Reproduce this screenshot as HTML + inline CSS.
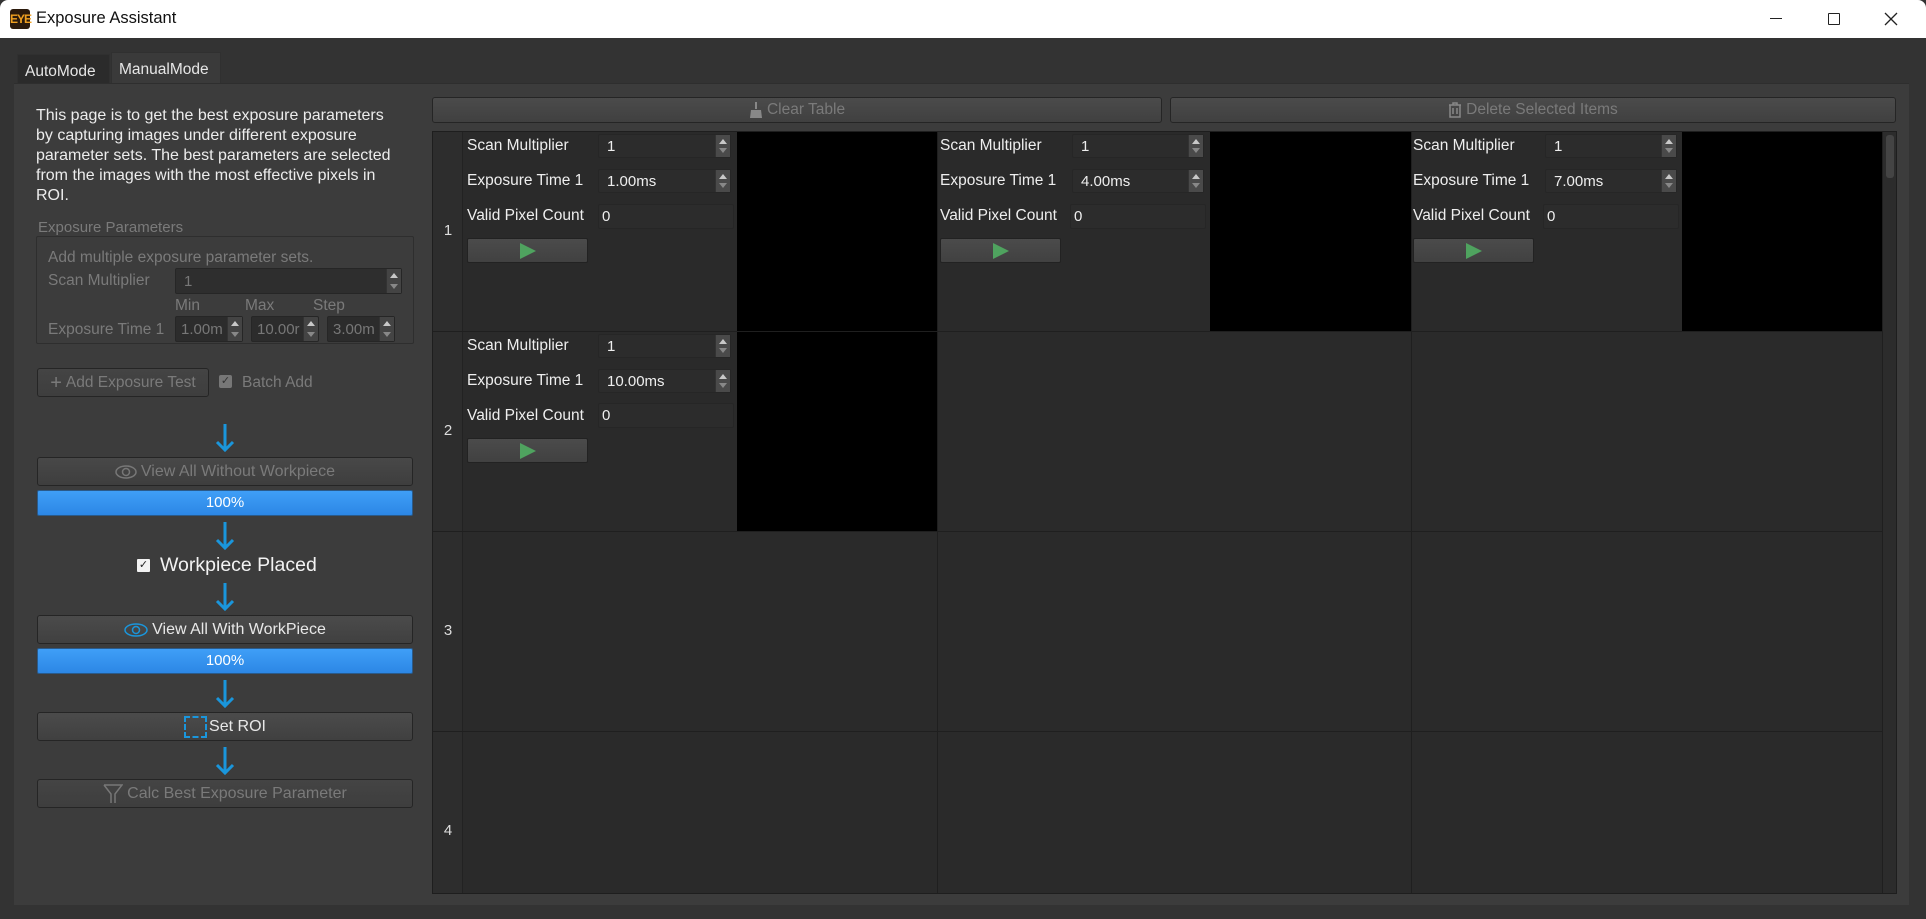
<!DOCTYPE html>
<html><head><meta charset="utf-8"><style>
*{box-sizing:border-box;margin:0;padding:0}
body{width:1926px;height:919px;background:#333;font-family:"Liberation Sans",sans-serif;color:#e6e6e6;position:relative;overflow:hidden;font-size:15px}
.a{position:absolute}
.btn{position:absolute;background:linear-gradient(#4b4b4b,#404040);border:1px solid #252525;border-radius:3px;text-align:center;color:#e8e8e8;display:flex;align-items:center;justify-content:center;gap:4px}
.dis{color:#7a7a7a}
.prog{position:absolute;left:37px;width:376px;height:26px;background:linear-gradient(#3f9ff7,#2c87e5);border:1px solid #2a5a8a;border-radius:2px;text-align:center;line-height:24px;color:#fff;font-size:15px}
.arr{position:absolute;left:214px;width:22px;height:29px}
.spin{position:absolute;background:#2c2c2c;border:1px solid #262626;border-radius:2px;padding-left:8px;color:#eee;display:flex;align-items:center}
.spin .ud{position:absolute;right:0;top:0;bottom:0;width:15px;background:#4a4a4a;border-left:1px solid #333}
.spin .ud:before{content:"";position:absolute;left:3px;top:4px;border:4px solid transparent;border-bottom:5px solid #c8c8c8;border-top:0}
.spin .ud:after{content:"";position:absolute;left:3px;bottom:4px;border:4px solid transparent;border-top:5px solid #888;border-bottom:0}
.lbl{position:absolute;color:#eee;font-size:15.5px}
.play{position:absolute;width:121px;height:25px;background:linear-gradient(#4b4b4b,#414141);border:1px solid #222;border-radius:2px}
.play:after{content:"";position:absolute;left:52px;top:4px;border-left:16px solid #4fa35f;border-top:8px solid transparent;border-bottom:8px solid transparent}
.blk{position:absolute;background:#000}
.rh{position:absolute;left:433px;width:30px;text-align:center;font-size:15px;color:#ddd}
</style></head><body>
<!-- title bar -->
<div class="a" style="left:0;top:0;width:1926px;height:38px;background:#fff;border-radius:8px 8px 0 0"></div>
<div class="a" style="left:10px;top:9px;width:20px;height:20px;background:#2b1a0c;border-radius:3px;color:#f0a020;font-size:12px;font-weight:bold;line-height:20px;text-align:center;letter-spacing:-1px">EYE</div>
<div class="a" style="left:36px;top:9px;color:#111;font-size:16.5px">Exposure Assistant</div>
<div class="a" style="left:1770px;top:18px;width:12px;height:1px;background:#222"></div>
<div class="a" style="left:1828px;top:13px;width:12px;height:12px;border:1.3px solid #222;border-radius:1px"></div>
<svg class="a" style="left:1884px;top:12px" width="14" height="14"><path d="M1 1L13 13M13 1L1 13" stroke="#222" stroke-width="1.3"/></svg>
<!-- tabs -->
<div class="a" style="left:17px;top:54px;width:93px;height:30px;background:#2b2b2b;border:1px solid #303030;font-size:15.5px;padding:8px 0 0 7px">AutoMode</div>
<div class="a" style="left:111px;top:52px;width:110px;height:32px;background:#3a3a3a;border:1px solid #303030;border-bottom:0;font-size:15.5px;padding:8px 0 0 7px">ManualMode</div>
<div class="a" style="left:14px;top:83px;width:1895px;height:822px;background:#3c3c3c;border-top:1px solid #2e2e2e"></div>
<!-- description -->
<div class="a" style="left:36px;top:106px;width:364px;font-size:16px;line-height:20px;color:#ececec">This page is to get the best exposure parameters by capturing images under different exposure parameter sets. The best parameters are selected from the images with the most effective pixels in ROI.</div>
<div class="a" style="left:36px;top:236px;width:378px;height:108px;border:1px solid #2e2e2e;border-radius:2px"></div>
<div class="a" style="left:38px;top:219px;font-size:15px;color:#7a7a7a;background:#3c3c3c;padding-right:3px">Exposure Parameters</div>
<div class="a dis" style="left:48px;top:249px;font-size:15.5px">Add multiple exposure parameter sets.</div>
<div class="a dis" style="left:48px;top:272px;font-size:15.5px">Scan Multiplier</div>
<div class="spin" style="left:175px;top:268px;width:227px;height:26px;color:#777;background:#2e2e2e">1<div class="ud" style="background:#444"></div></div>
<div class="a dis" style="left:175px;top:297px;font-size:15.5px">Min</div>
<div class="a dis" style="left:245px;top:297px;font-size:15.5px">Max</div>
<div class="a dis" style="left:313px;top:297px;font-size:15.5px">Step</div>
<div class="a dis" style="left:48px;top:321px;font-size:15.5px">Exposure Time 1</div>
<div class="spin" style="left:175px;top:316px;width:68px;height:26px;color:#777;padding-left:5px">1.00m<div class="ud" style="background:#444"></div></div>
<div class="spin" style="left:251px;top:316px;width:68px;height:26px;color:#777;padding-left:5px;overflow:hidden">10.00r<div class="ud" style="background:#444"></div></div>
<div class="spin" style="left:327px;top:316px;width:68px;height:26px;color:#777;padding-left:5px">3.00m<div class="ud" style="background:#444"></div></div>
<div class="btn dis" style="left:37px;top:368px;width:172px;height:29px;font-size:15.5px;background:linear-gradient(#444,#3e3e3e)"><span style="font-size:20px;line-height:16px">+</span> Add Exposure Test</div>
<div class="a" style="left:219px;top:375px;width:13px;height:13px;background:#777;border-radius:2px;color:#333;font-size:11px;line-height:13px;text-align:center">✓</div>
<div class="a dis" style="left:242px;top:374px;font-size:15.5px">Batch Add</div>
<!-- flow -->
<svg class="arr" style="top:423px"><path d="M11 1V27M3 19L11 27L19 19" stroke="#1a96dc" stroke-width="3" fill="none"/></svg>
<div class="btn dis" style="left:37px;top:457px;width:376px;height:29px;font-size:16px;background:linear-gradient(#484848,#3e3e3e)"><svg width="22" height="14"><ellipse cx="11" cy="7" rx="10" ry="6" fill="none" stroke="#777" stroke-width="1.5"/><circle cx="11" cy="7" r="3.5" fill="none" stroke="#777" stroke-width="1.5"/></svg>View All Without Workpiece</div>
<div class="prog" style="top:490px">100%</div>
<svg class="arr" style="top:521px"><path d="M11 1V27M3 19L11 27L19 19" stroke="#1a96dc" stroke-width="3" fill="none"/></svg>
<div class="a" style="left:137px;top:559px;width:13px;height:13px;background:#f2f2f2;border-radius:1px;color:#222;font-size:11px;line-height:13px;text-align:center">✓</div>
<div class="a" style="left:160px;top:554px;font-size:19.5px;color:#f2f2f2">Workpiece Placed</div>
<svg class="arr" style="top:582px"><path d="M11 1V27M3 19L11 27L19 19" stroke="#1a96dc" stroke-width="3" fill="none"/></svg>
<div class="btn" style="left:37px;top:615px;width:376px;height:29px;font-size:16px"><svg width="24" height="14"><ellipse cx="12" cy="7" rx="11" ry="6" fill="none" stroke="#1a96dc" stroke-width="1.5"/><circle cx="12" cy="7" r="3.5" fill="none" stroke="#1a96dc" stroke-width="1.5"/></svg>View All With WorkPiece</div>
<div class="prog" style="top:648px">100%</div>
<svg class="arr" style="top:679px"><path d="M11 1V27M3 19L11 27L19 19" stroke="#1a96dc" stroke-width="3" fill="none"/></svg>
<div class="btn" style="left:37px;top:712px;width:376px;height:29px;font-size:16px;gap:2px"><span style="display:inline-block;width:23px;height:22px;border:2px dashed #1a96dc"></span>Set ROI</div>
<svg class="arr" style="top:746px"><path d="M11 1V27M3 19L11 27L19 19" stroke="#1a96dc" stroke-width="3" fill="none"/></svg>
<div class="btn dis" style="left:37px;top:779px;width:376px;height:29px;font-size:16px;background:linear-gradient(#444,#3e3e3e)"><svg width="20" height="22"><path d="M1 2H19L12 11V20M8 20V11L1 2" fill="none" stroke="#777" stroke-width="1.5"/></svg> Calc Best Exposure Parameter</div>
<!-- top buttons -->
<div class="btn dis" style="left:432px;top:97px;width:730px;height:26px;font-size:15.5px"><svg width="14" height="16"><path d="M6 0H8V7H6Z M2 8H12L13 16H1Z" fill="#888"/></svg>Clear Table</div>
<div class="btn dis" style="left:1170px;top:97px;width:726px;height:26px;font-size:15.5px"><svg width="14" height="16"><path d="M1 3H13M5 3V1H9V3M2 3V15H12V3M5 6V12M9 6V12" fill="none" stroke="#888" stroke-width="1.5"/></svg>Delete Selected Items</div>
<!-- table -->
<div class="a" style="left:432px;top:131px;width:1465px;height:763px;background:#2a2a2a;border:1px solid #1e1e1e"></div>
<div class="a" style="left:433px;top:132px;width:30px;height:761px;background:#2d2d2d;border-right:1px solid #222"></div>
<div class="a" style="left:433px;top:331px;width:1450px;height:1px;background:#1f1f1f"></div>
<div class="a" style="left:433px;top:531px;width:1450px;height:1px;background:#1f1f1f"></div>
<div class="a" style="left:433px;top:731px;width:1450px;height:1px;background:#1f1f1f"></div>
<div class="a" style="left:937px;top:132px;width:1px;height:761px;background:#1f1f1f"></div>
<div class="a" style="left:1411px;top:132px;width:1px;height:761px;background:#1f1f1f"></div>
<div class="a" style="left:1882px;top:132px;width:1px;height:761px;background:#1f1f1f"></div>
<div class="a" style="left:1883px;top:132px;width:13px;height:761px;background:#2c2c2c"></div>
<div class="a" style="left:1886px;top:135px;width:8px;height:43px;background:#444;border-radius:3px"></div>
<div class="rh" style="top:222px">1</div>
<div class="rh" style="top:422px">2</div>
<div class="rh" style="top:622px">3</div>
<div class="rh" style="top:822px">4</div>
<!-- cell r1c1 -->
<div class="blk" style="left:737px;top:132px;width:200px;height:199px"></div>
<div class="lbl" style="left:467px;top:137px">Scan Multiplier</div>
<div class="spin" style="left:598px;top:134px;width:133px;height:24px">1<div class="ud"></div></div>
<div class="lbl" style="left:467px;top:172px">Exposure Time 1</div>
<div class="spin" style="left:598px;top:169px;width:133px;height:24px">1.00ms<div class="ud"></div></div>
<div class="lbl" style="left:467px;top:207px">Valid Pixel Count</div>
<div class="spin" style="left:598px;top:204px;width:136px;height:25px;padding-left:3px">0</div>
<div class="play" style="left:467px;top:238px"></div>
<!-- r1c2 -->
<div class="blk" style="left:1210px;top:132px;width:201px;height:199px"></div>
<div class="lbl" style="left:940px;top:137px">Scan Multiplier</div>
<div class="spin" style="left:1072px;top:134px;width:132px;height:24px">1<div class="ud"></div></div>
<div class="lbl" style="left:940px;top:172px">Exposure Time 1</div>
<div class="spin" style="left:1072px;top:169px;width:132px;height:24px">4.00ms<div class="ud"></div></div>
<div class="lbl" style="left:940px;top:207px">Valid Pixel Count</div>
<div class="spin" style="left:1070px;top:204px;width:136px;height:25px;padding-left:3px">0</div>
<div class="play" style="left:940px;top:238px"></div>
<!-- r1c3 -->
<div class="blk" style="left:1682px;top:132px;width:200px;height:199px"></div>
<div class="lbl" style="left:1413px;top:137px">Scan Multiplier</div>
<div class="spin" style="left:1545px;top:134px;width:132px;height:24px">1<div class="ud"></div></div>
<div class="lbl" style="left:1413px;top:172px">Exposure Time 1</div>
<div class="spin" style="left:1545px;top:169px;width:132px;height:24px">7.00ms<div class="ud"></div></div>
<div class="lbl" style="left:1413px;top:207px">Valid Pixel Count</div>
<div class="spin" style="left:1543px;top:204px;width:136px;height:25px;padding-left:3px">0</div>
<div class="play" style="left:1413px;top:238px"></div>
<!-- r2c1 -->
<div class="blk" style="left:737px;top:332px;width:200px;height:199px"></div>
<div class="lbl" style="left:467px;top:337px">Scan Multiplier</div>
<div class="spin" style="left:598px;top:334px;width:133px;height:24px">1<div class="ud"></div></div>
<div class="lbl" style="left:467px;top:372px">Exposure Time 1</div>
<div class="spin" style="left:598px;top:369px;width:133px;height:24px">10.00ms<div class="ud"></div></div>
<div class="lbl" style="left:467px;top:407px">Valid Pixel Count</div>
<div class="spin" style="left:598px;top:403px;width:136px;height:25px;padding-left:3px">0</div>
<div class="play" style="left:467px;top:438px"></div>
</body></html>
